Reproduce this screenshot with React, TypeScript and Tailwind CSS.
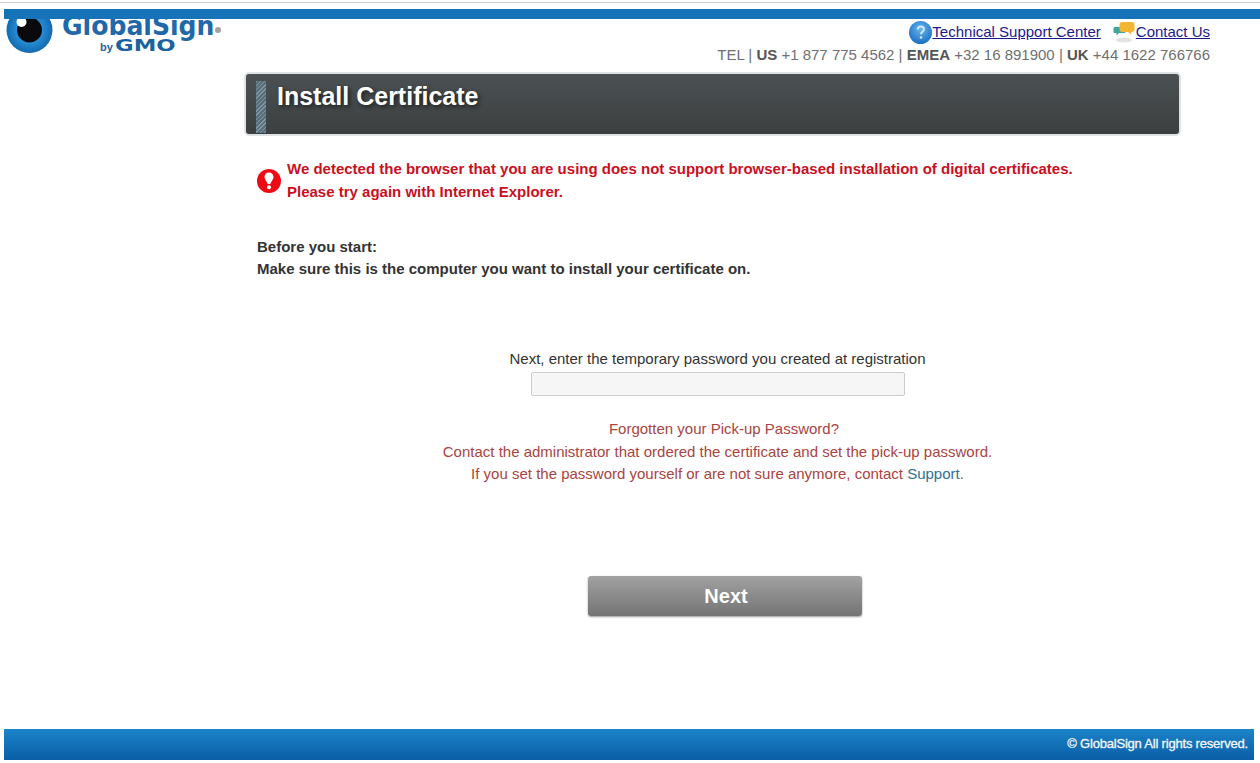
export default function App() {
  return (
    <div className="h-[763px] w-[1260px] overflow-hidden bg-white font-['Liberation_Sans',Arial,sans-serif]">
      <div className="mt-[2px] h-px bg-[#cfcfcf]" />
      <div className="relative z-10 ml-[4px] mt-[6px] h-[10px] bg-[#1673b8]" />
      <header className="-mt-[8px] flex h-[61px] justify-between pr-[50px]">
        <div className="relative ml-[6px] flex w-[230px] items-start overflow-hidden">
          <svg width="47" height="46" viewBox="0 0 47 46" className="-mt-[4px] shrink-0">
            <defs>
              <radialGradient id="eye" cx="50%" cy="50%" r="55%">
                <stop offset="40%" stopColor="#2a95dd" />
                <stop offset="100%" stopColor="#0f62a8" />
              </radialGradient>
            </defs>
            <circle cx="23.500" cy="23" r="23" fill="url(#eye)" />
            <circle cx="23.500" cy="23" r="12.500" fill="#0a0a0c" />
            <circle cx="15.500" cy="15" r="5" fill="#ffffff" />
          </svg>
          <div className="ml-[9px] flex flex-col pt-[1px]">
            <div className="flex items-start">
              <span className="w-[153px] origin-left scale-x-[0.965] whitespace-nowrap font-['DejaVu_Sans',sans-serif] text-[26px] leading-[28px] font-bold text-[#2068a8]">GlobalSign</span>
              <span className="mt-[15px] h-[6px] w-[6px] rounded-full bg-[#a8a0a0]" />
            </div>
            <div className="ml-[38px] flex items-baseline font-bold text-[#1c629f]">
              <span className="mr-[2px] text-[11px] leading-[12px]">by</span>
              <span className="w-[60px] origin-left scale-x-[1.42] font-['DejaVu_Sans',sans-serif] text-[16px] leading-[12px] font-bold">GMO</span>
            </div>
          </div>
        </div>
        <div className="flex flex-col items-end pt-[9px]">
          <div className="flex h-[24px] items-center text-[15px] text-[#1a1a8c]">
            <svg width="23" height="23" viewBox="0 0 23 23" className="shrink-0">
              <defs>
                <radialGradient id="q" cx="50%" cy="35%" r="65%">
                  <stop offset="0%" stopColor="#67b6ef" />
                  <stop offset="100%" stopColor="#1b6fc4" />
                </radialGradient>
              </defs>
              <circle cx="11.500" cy="11.500" r="11.500" fill="url(#q)" />
              <path d="M8.500 8.500c.3-2 1.500-3 3.300-3 2 0 3.200 1.200 3.200 2.800 0 2.400-3 2.600-3 4.900" fill="none" stroke="#d5e8f7" strokeWidth="2" />
              <circle cx="12" cy="16.500" r="1.300" fill="#d5e8f7" />
            </svg>
            <a className="underline">Technical Support Center</a>
            <svg width="23" height="22" viewBox="0 0 23 22" className="ml-[12px] shrink-0">
              <ellipse cx="11" cy="19" rx="8" ry="2.500" fill="#e3e3e3" />
              <path d="M2 6h9c1 0 1.500.6 1.500 1.500v3c0 1-.5 1.500-1.500 1.500H6l-2.500 2.500V12H2c-1 0-1.500-.5-1.500-1.500v-3C.5 6.600 1 6 2 6z" fill="#3ea79b" />
              <path d="M9 1h10c1.500 0 2.500 1 2.500 2.500v5c0 1.500-1 2.500-2.500 2.500h-1l.5 3-3.500-3H9c-1.500 0-2.500-1-2.500-2.500v-5C6.500 2 7.500 1 9 1z" fill="#f2b632" />
            </svg>
            <a className="underline">Contact Us</a>
          </div>
          <div className="mt-[1px] whitespace-nowrap text-[15px] leading-[20px] text-[#6f6f6f]">
            TEL | <b className="text-[#555]">US</b> +1 877 775 4562 | <b className="text-[#555]">EMEA</b> +32 16 891900 | <b className="text-[#555]">UK</b> +44 1622 766766
          </div>
        </div>
      </header>

      <main className="ml-[244px] w-[937px]">
        <div className="flex h-[64px] rounded-[5px] border-2 border-[#dfe3e4] bg-gradient-to-b from-[#4b5153] to-[#3c3f40] pl-[10px] pt-[7px]">
          <div className="h-[52px] w-[10px] bg-[repeating-linear-gradient(135deg,#7f98a8_0px,#7f98a8_1px,#5b6d78_1px,#5b6d78_3px)]" />
          <h1 className="ml-[11px] text-[25px] leading-[30px] font-bold text-white [text-shadow:2px_2px_4px_rgba(0,0,0,0.6)]">Install Certificate</h1>
        </div>

        <div className="pl-[13px] pr-[3px]">
          <div className="mt-[22px] flex items-center">
            <svg width="24" height="24" viewBox="0 0 24 24" className="shrink-0">
              <circle cx="12" cy="12" r="12" fill="#ee0a14" />
              <path d="M7.500 8C7.500 5.300 9.500 3.500 12 3.500S16.500 5.300 16.500 8c0 2.500-2.500 4.500-3.200 7h-2.600C10 12.500 7.500 10.500 7.500 8z" fill="#fff" />
              <circle cx="12" cy="18.300" r="2" fill="#fff" />
            </svg>
            <p className="ml-[6px] text-[15px] leading-[22.500px] font-bold text-[#c8101e]">
              We detected the browser that you are using does not support browser-based installation of digital certificates.
              <br />
              Please try again with Internet Explorer.
            </p>
          </div>

          <p className="mt-[33px] text-[15px] leading-[22px] font-bold text-[#333]">
            Before you start:
            <br />
            Make sure this is the computer you want to install your certificate on.
          </p>

          <div className="mt-[68px] flex flex-col items-center text-[15px]">
            <label className="leading-[22px] text-[#333]">Next, enter the temporary password you created at registration</label>
            <input className="mt-[2px] h-[24px] w-[374px] rounded-[2px] border border-[#cccccc] bg-[#f6f6f6]" />
            <div className="mt-[22px] text-center leading-[22.500px] text-[#a94442]">
              <p className="pl-[13px]">Forgotten your Pick-up Password?</p>
              <p>Contact the administrator that ordered the certificate and set the pick-up password.</p>
              <p>
                If you set the password yourself or are not sure anymore, contact <a className="text-[#31708f]">Support</a>.
              </p>
            </div>
            <div className="pl-[15px]">
              <button className="mt-[90px] h-[40px] w-[274px] rounded-[3px] bg-gradient-to-b from-[#a2a2a2] to-[#747474] pl-[2px] text-[20px] font-bold text-white shadow-[0_1px_2px_rgba(0,0,0,0.4)]">
                Next
              </button>
            </div>
          </div>
        </div>
      </main>

      <footer className="ml-[4px] mt-[113px] flex h-[31px] w-[1250px] items-center justify-end bg-gradient-to-b from-[#1b84c9] to-[#0b5ea6] pr-[6px] text-[13px] tracking-[-0.2px] text-[#f4f8fb] [-webkit-text-stroke:0.3px_#f4f8fb]">
        © GlobalSign All rights reserved.
      </footer>
    </div>
  );
}
